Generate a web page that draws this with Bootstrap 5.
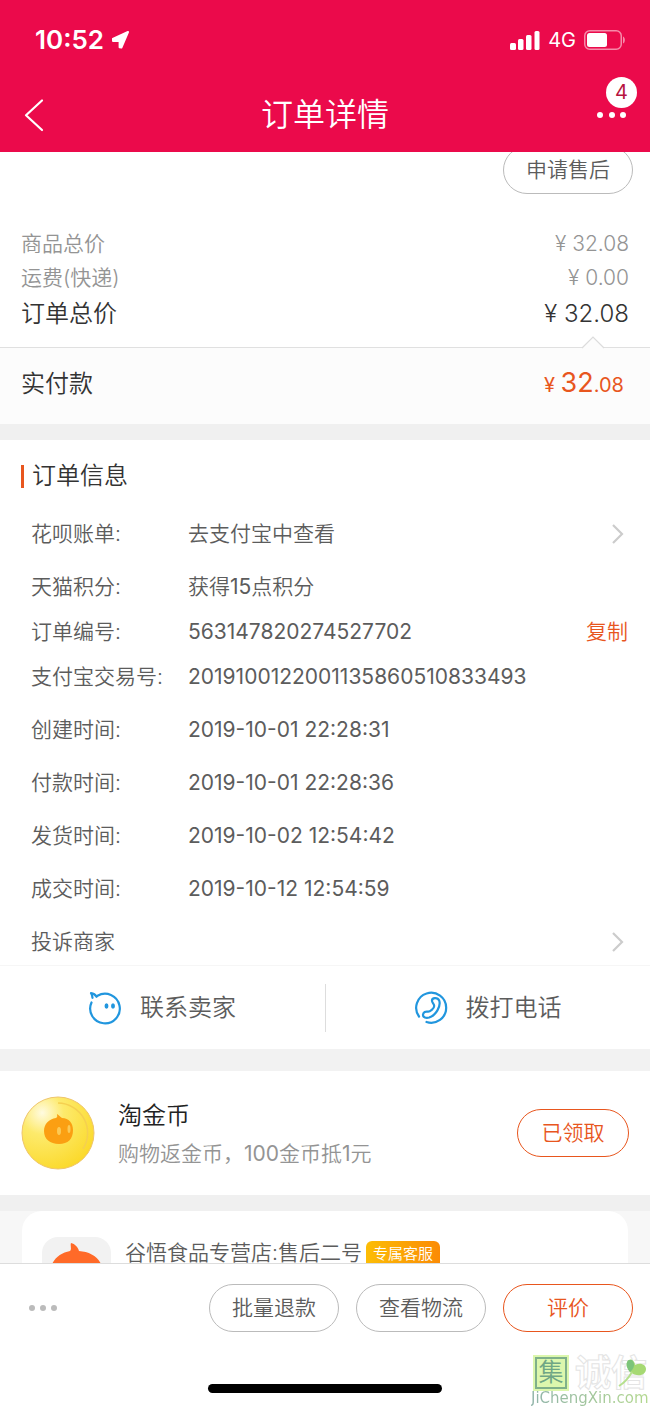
<!DOCTYPE html>
<html lang="zh-CN">
<head>
<meta charset="utf-8">
<meta name="viewport" content="width=device-width, initial-scale=1">
<title>订单详情</title>
<link href="https://cdn.jsdelivr.net/npm/bootstrap@5.3.0/dist/css/bootstrap.min.css" rel="stylesheet">
<style>
  :root { --brand: #eb0a4b; --accent: #e8561e; --ink: #333; --soft: #5c5c5c; --muted: #949494; }
  body { font-family: Inter, "Noto Sans CJK SC", sans-serif; font-weight: 350; font-size: 21px; line-height: 32px; color: var(--soft); background: #fff; }
  svg { display: block; flex: none; }
  .app-head { background: var(--brand); color: #fff; }
  .status-bar { height: 80px; padding: 0 24px 0 35px; }
  .clock { font-size: 26px; font-weight: 600; }
  .network { font-size: 20px; font-weight: 400; }
  .title-bar { height: 72px; padding: 0 22px 2px; }
  .title-bar h1 { font-size: 32px; font-weight: 350; line-height: 40px; }
  .icon-btn { background: none; border: 0; padding: 0; color: inherit; }
  .count { top: -34px; right: -9px; width: 31px; height: 31px; border-radius: 50%; background: #fff; color: #b8143f; font-size: 20px; line-height: 31px; }
  .app-main { min-height: 0; overflow: hidden; }
  .pill { min-width: 130px; height: 48px; padding: 0 20px; border: 1px solid #bbb; border-radius: 24px; background: #fff; color: var(--soft); font-size: 21px; font-weight: 350; line-height: 44px; }
  .pill-accent { border-color: var(--accent); color: var(--accent); }
  .pill-claim { min-width: 112px; }
  .pill-row { gap: 17px; }
  .num { font-weight: 400; }
  .refund { margin-top: -6px; padding: 0 17px; }
  .totals { padding: 33px 21px 14px; line-height: 34px; color: var(--muted); }
  .grand { font-size: 24px; line-height: 38px; color: var(--ink); }
  .paid { position: relative; height: 77px; padding: 0 26px 4px 21px; border-top: 1px solid #e0e0e0; background: #fcfcfc; font-size: 24px; color: var(--ink); }
  .notch { position: absolute; top: -12px; right: 45px; }
  .price { color: var(--accent); font-size: 20px; font-weight: 400; }
  .price b { font-size: 27px; font-weight: 400; }
  .band { height: 16px; background: #f0f0f0; }
  .band-wide { height: 22px; background: #f2f2f2; }
  .section-title { margin: 0; padding: 20px 21px 19px; font-size: 24px; font-weight: 350; line-height: 32px; color: var(--ink); }
  .section-title::before { content: ""; width: 3px; height: 23px; margin-right: 8px; background: var(--accent); }
  .info { margin: 0; padding: 0 22px 1px 31px; }
  .info-row { height: 45px; }
  .info-row dt { width: 157px; font-weight: 350; }
  .info-row a { color: inherit; text-decoration: none; }
  .copy { color: var(--accent); font-weight: 350; }
  .contact { height: 84px; border-top: 1px solid #f6f6f6; font-size: 24px; }
  .contact a { gap: 18px; color: var(--soft); text-decoration: none; }
  .contact a + a { border-left: 1px solid #ddd; height: 48px; }
  .coin { height: 124px; padding: 0 21px; gap: 23px; }
  .coin h2 { margin: 3px 0 6px; font-size: 24px; font-weight: 350; line-height: 32px; color: #222; }
  .coin p { color: var(--muted); }
  .service { background: #f7f7f7; padding: 0 22px; }
  .service-card { gap: 14px; border-radius: 20px 20px 0 0; background: #fff; padding: 26px 20px; }
  .avatar { border-radius: 16px; background: #f2f2f2; }
  .tag { height: 28px; padding: 0 7px; border-radius: 6px; background: linear-gradient(90deg, #fcbd06, #fb8b05); color: #fff; font-size: 15px; line-height: 25px; }
  .app-foot { height: 144px; padding: 20px 17px 0; border-top: 1px solid #ddd; background: #fff; position: relative; }
  .home-line { width: 38%; height: 9px; border-radius: 5px; background: #000; margin: 52px auto 0; }
  .more { margin-left: 11px; }
  .watermark { position: absolute; right: 0; bottom: 0; width: 119px; }
  .seal { width: 32px; height: 32px; border: 2px solid #7fb08a; outline: 2px solid #dcf7ad; background: #dcf7ad; color: #6fa685; font-size: 25px; line-height: 26px; }
  .ghost { font-size: 36px; font-weight: 700; line-height: 32px; color: #fff; -webkit-text-stroke: 1px #e4e4e4; }
  .leaf { position: absolute; right: 0; top: -2px; }
  .site { font-family: "DejaVu Sans", sans-serif; font-size: 15px; font-weight: 400; line-height: 18px; background: linear-gradient(90deg, #8fb3a8, #b4d98f); -webkit-background-clip: text; background-clip: text; color: transparent; }
</style>
</head>
<body>
<div class="vh-100 d-flex flex-column overflow-hidden">
  <header class="app-head flex-shrink-0">
    <div class="status-bar d-flex align-items-center justify-content-between">
      <div class="d-flex align-items-center gap-2">
        <span class="clock">10:52</span>
        <svg width="18" height="18" viewBox="0 0 18 18" fill="#fff"><path d="M16 1 9.400 16.500 7.600 16.200V10H1L.8 8Z" stroke="#fff" stroke-width="2" stroke-linejoin="round"/></svg>
      </div>
      <div class="d-flex align-items-center gap-2">
        <svg width="30" height="19" viewBox="0 0 30 19" fill="#fff"><rect y="12" width="6" height="7" rx="1.500"/><rect x="8" y="8" width="5.500" height="11" rx="1.500"/><rect x="16" y="4" width="5.500" height="15" rx="1.500"/><rect x="24.500" width="5" height="19" rx="1.500"/></svg>
        <span class="network">4G</span>
        <svg width="42" height="20" viewBox="0 0 42 20"><rect x=".75" y=".75" width="36.500" height="18.500" rx="5" fill="none" stroke="#f68aa9" stroke-width="1.500"/><rect x="3" y="3" width="20" height="14" rx="2.500" fill="#fff"/><path d="M39 6.500c2.500 1 2.500 6 0 7z" fill="#f68aa9"/></svg>
      </div>
    </div>
    <nav class="title-bar d-flex align-items-center justify-content-between" aria-label="页面">
      <button class="icon-btn" type="button" aria-label="返回"><svg width="32" height="34" viewBox="0 0 32 34" fill="none" stroke="#fff" stroke-width="2.200" stroke-linecap="round" stroke-linejoin="round"><path d="M20 2.500 4 17.300 20 32"/></svg></button>
      <h1 class="m-0">订单详情</h1>
      <button class="icon-btn position-relative" type="button" aria-label="更多">
        <svg width="32" height="8" viewBox="0 0 32 8" fill="#fff"><circle cx="4" cy="4" r="3"/><circle cx="16" cy="4" r="3"/><circle cx="27" cy="4" r="3"/></svg>
        <span class="count position-absolute text-center">4</span>
      </button>
    </nav>
  </header>

  <main class="app-main flex-fill">
    <div class="refund d-flex justify-content-end"><button class="pill" type="button">申请售后</button></div>
    <section class="totals">
      <div class="d-flex justify-content-between"><span>商品总价</span><span>¥ 32.08</span></div>
      <div class="d-flex justify-content-between"><span>运费(快递)</span><span>¥ 0.00</span></div>
      <div class="grand d-flex justify-content-between"><span>订单总价</span><span>¥ 32.08</span></div>
    </section>
    <section class="paid d-flex align-items-center justify-content-between">
      <svg class="notch" width="24" height="13" viewBox="0 0 24 13"><path d="M1 12 12 1l11 11" fill="#fcfcfc" stroke="#dcdcdc" stroke-width="1.200"/></svg>
      <span>实付款</span><span class="price">¥ <b>32</b>.08</span>
    </section>
    <div class="band"></div>

    <section>
      <h2 class="section-title d-flex align-items-center">订单信息</h2>
      <dl class="info">
        <div class="info-row d-flex align-items-center mb-2"><dt>花呗账单:</dt><dd class="m-0 flex-fill"><a href="#">去支付宝中查看</a></dd>
          <svg width="18" height="22" viewBox="0 0 18 22" fill="none" stroke="#ccc" stroke-width="2.200"><path d="M3 2l9 9-9 9"/></svg></div>
        <div class="info-row d-flex align-items-center"><dt>天猫积分:</dt><dd class="m-0">获得<span class="num">15</span>点积分</dd></div>
        <div class="info-row d-flex align-items-center"><dt>订单编号:</dt><dd class="m-0 flex-fill num">563147820274527702</dd><button class="icon-btn copy" type="button">复制</button></div>
        <div class="info-row d-flex align-items-center mb-2"><dt>支付宝交易号:</dt><dd class="m-0 num">2019100122001135860510833493</dd></div>
        <div class="info-row d-flex align-items-center mb-2"><dt>创建时间:</dt><dd class="m-0 num">2019-10-01 22:28:31</dd></div>
        <div class="info-row d-flex align-items-center mb-2"><dt>付款时间:</dt><dd class="m-0 num">2019-10-01 22:28:36</dd></div>
        <div class="info-row d-flex align-items-center mb-2"><dt>发货时间:</dt><dd class="m-0 num">2019-10-02 12:54:42</dd></div>
        <div class="info-row d-flex align-items-center mb-2"><dt>成交时间:</dt><dd class="m-0 num">2019-10-12 12:54:59</dd></div>
        <div class="info-row d-flex align-items-center"><dt class="flex-fill"><a href="#">投诉商家</a></dt>
          <dd class="m-0"><svg width="18" height="22" viewBox="0 0 18 22" fill="none" stroke="#ccc" stroke-width="2.200"><path d="M3 2l9 9-9 9"/></svg></dd></div>
      </dl>
      <div class="contact d-flex align-items-center">
        <a class="d-flex align-items-center justify-content-center w-50" href="#">
          <svg width="33" height="34" viewBox="0 0 33 34" fill="none" stroke="#2196de" stroke-width="2.200" stroke-linecap="round" stroke-linejoin="round"><path d="M2.500 11.500A14.800 14.800 0 1 0 8.500 4.800L7.500 5.800C6.500 4 4.500 2.500 2 2.200c1.500 2 1.200 3.500 1.500 4.600"/><ellipse cx="17.500" cy="15" rx="1.200" ry="2" fill="#2196de" stroke-width="1.500"/><ellipse cx="24" cy="15" rx="1.200" ry="2" fill="#2196de" stroke-width="1.500"/></svg>
          联系卖家</a>
        <a class="d-flex align-items-center justify-content-center w-50" href="#">
          <svg width="33" height="34" viewBox="0 0 33 34" fill="none" stroke="#2196de" stroke-width="2.200" stroke-linecap="round" stroke-linejoin="round"><path d="M4 25.500A15 15 0 1 1 11.500 31"/><path d="M17 10c-.3-3.300 5.500-4 7.200-.5 2 5.800-3.400 14.800-10 17-3 .9-6.500 0-6.200-2.800.3-2.600 2.500-3.400 5-3 1.800.2 6.200-3.200 6.200-5.700C19.200 13 17.200 12 17 10Z"/></svg>
          拨打电话</a>
      </div>
    </section>
    <div class="band-wide"></div>

    <section class="coin d-flex align-items-center">
      <svg width="74" height="74" viewBox="0 0 74 74">
        <defs><radialGradient id="gold" cx=".28" cy=".22" r=".85"><stop offset="0" stop-color="#fffbe0"/><stop offset=".35" stop-color="#fdea6c"/><stop offset="1" stop-color="#fbd92a"/></radialGradient></defs>
        <circle cx="37" cy="37" r="36" fill="url(#gold)" stroke="#efc56a" stroke-width="1"/>
        <path d="M37 7a30 30 0 0 1 25 46" fill="none" stroke="#f5d050" stroke-width="1.500"/>
        <path d="M36 18c2 1 3 3 5 4 7 0 11 5 11 12 0 9-5 14-14 14s-15-5-15-13c0-7 5-12 12-13 2-1 1-2 1-4Z" fill="#fb9f12"/>
        <ellipse cx="38" cy="35" rx="2" ry="4" fill="#fcc954"/><ellipse cx="48" cy="33" rx="1.500" ry="4" fill="#fcc954"/>
      </svg>
      <div class="flex-fill"><h2>淘金币</h2><p class="m-0">购物返金币，<span class="num">100</span>金币抵<span class="num">1</span>元</p></div>
      <button class="pill pill-accent pill-claim" type="button">已领取</button>
    </section>
    <div class="band"></div>

    <section class="service">
      <div class="service-card d-flex align-items-start">
        <svg class="avatar" width="69" height="69" viewBox="0 0 69 69"><path d="M29 6c4 1 7 4 8 8 13 1 24 8 24 23 0 14-11 22-26 22S8 51 8 37c0-13 9-21 20-23 2-2 0-5 1-8Z" fill="#ff6a28"/><ellipse cx="30" cy="38" rx="3" ry="6" fill="#fff"/><ellipse cx="47" cy="38" rx="3" ry="6" fill="#fff"/></svg>
        <div class="d-flex align-items-start gap-1"><span>谷悟食品专营店:售后二号</span><span class="tag mt-1">专属客服</span></div>
      </div>
    </section>
  </main>

  <footer class="app-foot flex-shrink-0">
    <div class="d-flex align-items-center">
      <button class="icon-btn more me-auto" type="button" aria-label="更多操作"><svg width="30" height="8" viewBox="0 0 30 8" fill="#bbb"><circle cx="4" cy="4" r="3"/><circle cx="15" cy="4" r="3"/><circle cx="26" cy="4" r="3"/></svg></button>
      <div class="pill-row d-flex">
        <button class="pill" type="button">批量退款</button>
        <button class="pill" type="button">查看物流</button>
        <button class="pill pill-accent" type="button">评价</button>
      </div>
    </div>
    <div class="home-line"></div>
    <div class="watermark">
      <div class="d-flex align-items-center gap-1 ps-1"><span class="seal text-center me-1">集</span><span class="ghost text-nowrap">诚信</span></div>
      <svg class="leaf" width="36" height="36" viewBox="0 0 36 36"><path d="M16 17C10 10 13 3 18 5c2 1 3 3 3 5 6-3 11 0 11 4 0 6-8 9-16 3Z" fill="#a6d973"/><path d="M16 17C10 10 13 3 18 5c3 3 3 8-2 12Z" fill="#7cc47a"/><path d="M18 17C14 24 10 28 5 31" fill="none" stroke="#b5e08e" stroke-width="2"/></svg>
      <div class="site">JiChengXin.com</div>
    </div>
  </footer>
</div>
<script src="https://cdn.jsdelivr.net/npm/bootstrap@5.3.0/dist/js/bootstrap.bundle.min.js"></script>
</body>
</html>
